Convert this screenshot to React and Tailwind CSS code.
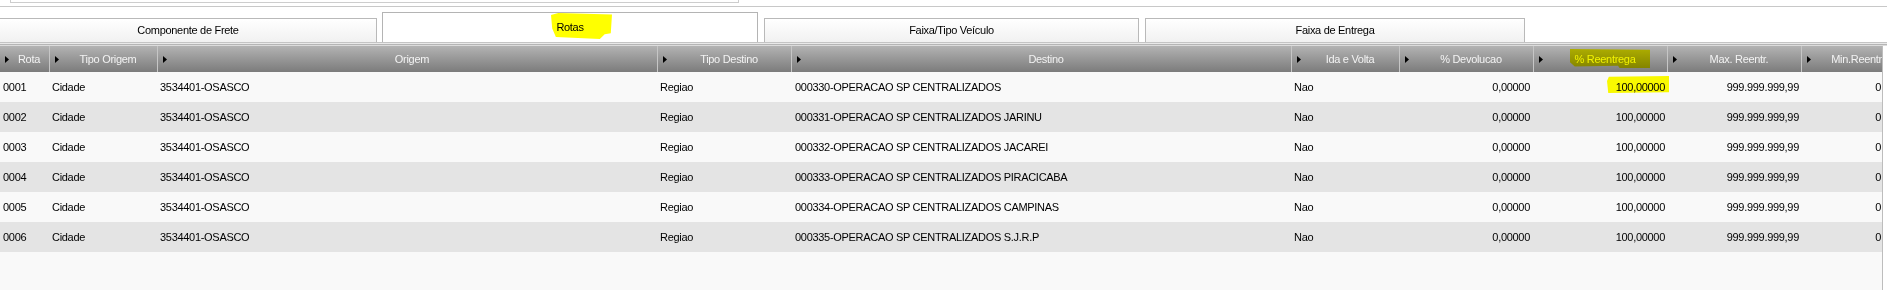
import React from "react";

const COLS = [
  { cw: "w-[50px]", head: "Rota", pad: "pl-[3px]" },
  { cw: "w-[108px]", head: "Tipo Origem", pad: "pl-[2px]" },
  { cw: "w-[500px]", head: "Origem", pad: "pl-[2px]" },
  { cw: "w-[134px]", head: "Tipo Destino", pad: "pl-[2px]" },
  { cw: "w-[500px]", head: "Destino", pad: "pl-[3px]" },
  { cw: "w-[108px]", head: "Ida e Volta", pad: "pl-[2px]" },
  { cw: "w-[134px]", head: "% Devolucao", pad: "pr-[4px] justify-end" },
  { cw: "w-[134px]", head: "% Reentrega", pad: "pr-[3px] justify-end" },
  { cw: "w-[134px]", head: "Max. Reentr.", pad: "pr-[3px] justify-end" },
  { cw: "w-[80px]", head: "Min.Reentr", pad: "pr-[1px] justify-end", last: true },
];

const ROWS = [
  ["0001", "000330-OPERACAO SP CENTRALIZADOS"],
  ["0002", "000331-OPERACAO SP CENTRALIZADOS JARINU"],
  ["0003", "000332-OPERACAO SP CENTRALIZADOS JACAREI"],
  ["0004", "000333-OPERACAO SP CENTRALIZADOS PIRACICABA"],
  ["0005", "000334-OPERACAO SP CENTRALIZADOS CAMPINAS"],
  ["0006", "000335-OPERACAO SP CENTRALIZADOS S.J.R.P"],
];

function Tri() {
  return (
    <svg width="4" height="7" viewBox="0 0 4 7" className="shrink-0">
      <polygon points="0,0 4,3.5 0,7" fill="#000" />
    </svg>
  );
}

export default function App() {
  return (
    <div
      className="relative w-[1887px] h-[290px] overflow-hidden bg-white text-[11px] tracking-[-0.3px] text-black"
      style={{ fontFamily: '"Liberation Sans", Arial, sans-serif' }}
    >
      {/* top cut-off box */}
      <div className="ml-[10px] w-[729px] h-[3px] border-x border-b border-[#cdcdcd] bg-white" />
      <div className="h-[3px]" />
      <div className="h-px bg-[#c8c8c8]" />

      {/* tabs */}
      <div className="flex items-end h-[35px]">
        <div className="w-[377px] h-[24px] border-t border-r border-[#b9b9b9] bg-gradient-to-b from-white to-[#f1f1f1] flex items-center justify-center">
          Componente de Frete
        </div>
        <div className="ml-[5px] w-[376px] h-[30px] border-t border-x border-[#b4b4b4] bg-white flex items-center justify-center">
          Rotas
        </div>
        <div className="ml-[6px] w-[375px] h-[24px] border-t border-x border-[#b9b9b9] bg-gradient-to-b from-white to-[#f1f1f1] flex items-center justify-center">
          Faixa/Tipo Veículo
        </div>
        <div className="ml-[6px] w-[380px] h-[24px] border-t border-x border-[#b9b9b9] bg-gradient-to-b from-white to-[#f1f1f1] flex items-center justify-center">
          Faixa de Entrega
        </div>
      </div>
      <div className="h-px bg-[#c4c4c4]" />
      <div className="h-px bg-[#e9e9e9]" />
      <div className="h-px bg-[#b5b5b5]" />
      <div className="h-[1px] bg-[#dcdcdc]" />

      {/* grid */}
      <div className="w-[1883px] h-[245px] border-r border-[#bdbdbd] bg-[#f9f9f9]">
        <div className="flex h-[26px] bg-gradient-to-b from-[#b3b3b3] to-[#7c7c7c] text-[#f3f3f3]">
          {COLS.map((c) => (
            <div
              key={c.head}
              className={`${c.cw} ${c.last ? "" : "border-r border-[#c6c6c6]"} h-full flex items-center pl-[5px] overflow-hidden`}
            >
              <Tri />
              <span
                className={`flex-1 whitespace-nowrap ${c.last ? "text-right" : "text-center"}`}
              >
                {c.head}
              </span>
            </div>
          ))}
        </div>
        {ROWS.map(([id, dest], i) => {
          const vals = [id, "Cidade", "3534401-OSASCO", "Regiao", dest, "Nao", "0,00000", "100,00000", "999.999.999,99", "0"];
          return (
            <div
              key={id}
              className={`flex h-[30px] ${i % 2 === 0 ? "bg-[#f9f9f9]" : "bg-[#e4e4e4]"}`}
            >
              {COLS.map((c, j) => (
                <div
                  key={j}
                  className={`${c.cw} ${c.pad} h-full flex items-center whitespace-nowrap overflow-hidden`}
                >
                  {vals[j]}
                </div>
              ))}
            </div>
          );
        })}
      </div>

      {/* highlighter marks */}
      <div className="absolute left-[551px] top-[13px] w-[61px] h-[26px] bg-[#ffff00] mix-blend-multiply [clip-path:polygon(0_8%,12%_0,100%_6%,98%_78%,88%_82%,80%_100%,8%_92%,2%_60%)]" />
      <div className="absolute left-[1570px] top-[49px] w-[80px] h-[19px] bg-[#ffff00] mix-blend-multiply [clip-path:polygon(0_0,100%_4%,100%_100%,62%_100%,60%_88%,6%_92%,0_70%)]" />
      <div className="absolute left-[1607px] top-[76px] w-[62px] h-[17px] bg-[#ffff00] mix-blend-multiply [clip-path:polygon(3%_4%,100%_0,100%_96%,2%_100%,0_30%)]" />
    </div>
  );
}
